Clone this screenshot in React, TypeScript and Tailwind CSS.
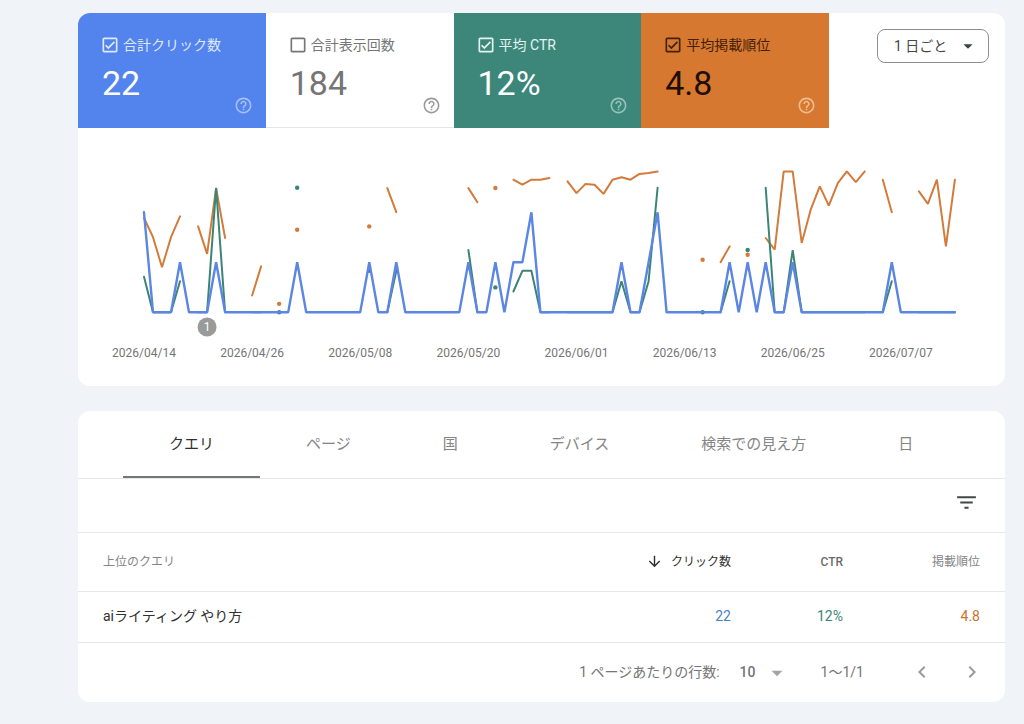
import { useState } from "react";
import {
  MdArrowDownward,
  MdArrowDropDown,
  MdCheckBoxOutlineBlank,
  MdChevronLeft,
  MdChevronRight,
  MdFilterList,
  MdHelpOutline,
  MdOutlineCheckBox,
} from "react-icons/md";

type Metric = {
  id: string;
  label: string;
  value: string;
  tile: string;
  labelColor: string;
  valueColor: string;
  helpColor: string;
};

const METRICS: Metric[] = [
  {
    id: "clicks",
    label: "合計クリック数",
    value: "22",
    tile: "bg-[#5383ec] border-[#5383ec]",
    labelColor: "text-[#dfe9ff]",
    valueColor: "text-white",
    helpColor: "text-[#a6c0f7]",
  },
  {
    id: "impressions",
    label: "合計表示回数",
    value: "184",
    tile: "bg-white border-[#e6e6e8]",
    labelColor: "text-[#757575]",
    valueColor: "text-[#757575]",
    helpColor: "text-[#9a9a9a]",
  },
  {
    id: "ctr",
    label: "平均 CTR",
    value: "12%",
    tile: "bg-[#3c877a] border-[#3c877a]",
    labelColor: "text-[#e3f3ef]",
    valueColor: "text-white",
    helpColor: "text-[#97c4ba]",
  },
  {
    id: "position",
    label: "平均掲載順位",
    value: "4.8",
    tile: "bg-[#d6782f] border-[#d6782f]",
    labelColor: "text-[#43200a]",
    valueColor: "text-[#1f0e03]",
    helpColor: "text-[#f0bd92]",
  },
];

const TABS = ["クエリ", "ページ", "国", "デバイス", "検索での見え方", "日"];

// One point per day, keyed by days since 2026/04/14.
const DAYS = 91;
const CLICKS: Record<number, number> = {
  0: 2, 4: 1, 8: 1, 17: 1, 25: 1, 28: 1, 36: 1, 39: 1, 41: 1, 42: 1, 43: 2,
  53: 1, 56: 1, 57: 2, 65: 1, 67: 1, 69: 1, 72: 1, 83: 1,
};

// Runs of consecutive days that had impressions.
type Run = { start: number; ctr: number[]; position: number[] };

const RUNS: Run[] = [
  { start: 0, ctr: [0.286, 0, 0, 0, 0.25], position: [6.6, 8.9, 12.5, 8.9, 6.4] },
  { start: 6, ctr: [0, 0, 1, 0], position: [7.6, 10.9, 3, 9] },
  { start: 12, ctr: [0, 0], position: [15.9, 12.4] },
  { start: 15, ctr: [0], position: [16.9] },
  { start: 17, ctr: [1], position: [8] },
  { start: 25, ctr: [0.333], position: [7.6] },
  { start: 27, ctr: [0, 0.333], position: [3, 5.9] },
  { start: 36, ctr: [0.5, 0], position: [3, 4.7] },
  { start: 39, ctr: [0.2], position: [3] },
  { start: 41, ctr: [0.167, 0.333, 0.333, 0, 0], position: [2, 2.6, 2, 2, 1.8] },
  {
    start: 47,
    ctr: [0, 0, 0, 0, 0, 0, 0.25, 0, 0, 0.25, 1],
    position: [2.2, 3.6, 2.5, 2.6, 3.7, 2, 1.7, 2, 1.3, 1.2, 1],
  },
  { start: 62, ctr: [0], position: [11.6] },
  { start: 64, ctr: [0, 0.25], position: [11.9, 10] },
  { start: 67, ctr: [0.5], position: [11] },
  {
    start: 69,
    ctr: [1, 0, 0, 0.5, 0, 0, 0, 0, 0, 0, 0, 0],
    position: [9, 10.4, 1, 1, 9.6, 5.6, 2.8, 5.1, 2.4, 1, 2.3, 1],
  },
  { start: 82, ctr: [0, 0.25], position: [2, 5.9] },
  { start: 86, ctr: [0, 0, 0, 0, 0], position: [3.4, 4.9, 2, 10, 2] },
];

const DATE_TICKS = [
  "2026/04/14", "2026/04/26", "2026/05/08", "2026/05/20",
  "2026/06/01", "2026/06/13", "2026/06/25", "2026/07/07",
];

const BASELINE = 184.3;
const dayX = (day: number) => 66 + day * 9.01;
const clicksY = (n: number) => BASELINE - n * 50;
const ctrY = (r: number) => BASELINE - r * 124.5;
const positionY = (p: number) => 43.4 + (p - 1) * 8.33;

function toPoints(start: number, ys: number[]) {
  return ys.map((y, i) => `${dayX(start + i).toFixed(1)},${y.toFixed(1)}`).join(" ");
}

function Series({
  start,
  ys,
  color,
  width = 2,
}: {
  start: number;
  ys: number[];
  color: string;
  width?: number;
}) {
  if (ys.length === 1) {
    return <circle cx={dayX(start)} cy={ys[0]} r="2.2" fill={color} />;
  }
  return (
    <polyline
      points={toPoints(start, ys)}
      fill="none"
      stroke={color}
      strokeWidth={width}
      strokeLinecap="round"
      strokeLinejoin="bevel"
    />
  );
}

function PerformanceChart() {
  const clicks = Array.from({ length: DAYS }, (_, day) => clicksY(CLICKS[day] ?? 0));

  return (
    <svg viewBox="0 0 927 258" className="block w-full" role="img" aria-label="検索パフォーマンス">
      {RUNS.map((run) => (
        <Series key={run.start} start={run.start} ys={run.position.map(positionY)} color="#d37b3a" />
      ))}
      {RUNS.map((run) => (
        <Series key={run.start} start={run.start} ys={run.ctr.map(ctrY)} color="#3c8475" />
      ))}
      <Series start={0} ys={clicks} color="#5b86e3" width={2.4} />

      <circle cx={dayX(7)} cy="199" r="9.5" fill="#9a9a9a" />
      <text x={dayX(7)} y="203" textAnchor="middle" className="fill-white text-[12px]">
        1
      </text>

      {DATE_TICKS.map((date, i) => (
        <text
          key={date}
          x={dayX(i * 12)}
          y="229"
          textAnchor="middle"
          className="fill-[#757575] text-[12px]"
        >
          {date}
        </text>
      ))}
    </svg>
  );
}

function MetricTile({
  metric,
  checked,
  onToggle,
}: {
  metric: Metric;
  checked: boolean;
  onToggle: () => void;
}) {
  const Box = checked ? MdOutlineCheckBox : MdCheckBoxOutlineBlank;

  return (
    <div className={`flex flex-1 flex-col border-b pt-[22px] pl-[22px] ${metric.tile}`}>
      <label
        className={`relative flex cursor-pointer items-center gap-[3px] text-[14px] leading-5 whitespace-nowrap ${metric.labelColor}`}
      >
        <input
          type="checkbox"
          checked={checked}
          onChange={onToggle}
          className="absolute top-0 left-0 size-5 cursor-pointer opacity-0"
        />
        <Box size={20} aria-hidden className="shrink-0" />
        {metric.label}
      </label>
      <div className="mt-2 flex h-[52px] justify-between pr-[13px]">
        <span className={`pl-0.5 text-[34px] leading-10 ${metric.valueColor}`}>{metric.value}</span>
        <button type="button" aria-label="ヘルプ" className={`self-end ${metric.helpColor}`}>
          <MdHelpOutline size={19} />
        </button>
      </div>
      <div className="h-3" />
    </div>
  );
}

export default function App() {
  const [enabled, setEnabled] = useState<Record<string, boolean>>({
    clicks: true,
    impressions: false,
    ctr: true,
    position: true,
  });
  const [tab, setTab] = useState(TABS[0]);

  return (
    <main
      lang="ja"
      className="flex min-h-dvh flex-col gap-[25px] bg-[#f0f3f8] pt-[13px] pr-[19px] pb-[22px] pl-[78px] font-['Roboto','Noto_Sans_CJK_JP',sans-serif]"
    >
      <section className="overflow-hidden rounded-xl bg-white">
        <div className="flex">
          <div className="flex max-w-[751px] flex-1">
            {METRICS.map((metric) => (
              <MetricTile
                key={metric.id}
                metric={metric}
                checked={enabled[metric.id]}
                onToggle={() => setEnabled({ ...enabled, [metric.id]: !enabled[metric.id] })}
              />
            ))}
          </div>
          <div className="relative mt-4 mr-4 ml-auto self-start">
            <select
              aria-label="期間の単位"
              className="h-[34px] w-28 appearance-none rounded-lg border border-[#8e8e8e] bg-white pl-4 text-[14px] text-[#444746]"
            >
              <option>1 日ごと</option>
            </select>
            <MdArrowDropDown
              size={22}
              aria-hidden
              className="pointer-events-none absolute top-1.5 right-2.5 text-[#3c4043]"
            />
          </div>
        </div>
        <PerformanceChart />
      </section>

      <section className="overflow-hidden rounded-xl bg-white text-[14px]">
        <div role="tablist" className="flex border-b border-[#e6e7ea] px-[45px]">
          {TABS.map((name) => (
            <button
              key={name}
              type="button"
              role="tab"
              aria-selected={tab === name}
              onClick={() => setTab(name)}
              className={`h-[67px] border-b-2 px-[46px] pt-0.5 text-[15px] whitespace-nowrap ${
                tab === name
                  ? "border-[#747775] text-[#303030]"
                  : "border-transparent text-[#858585]"
              }`}
            >
              {name}
            </button>
          ))}
        </div>

        <div className="flex h-[54px] items-start justify-end border-b border-[#e6e7ea] pt-[11px] pr-[26px]">
          <button type="button" aria-label="フィルタ" className="text-[#444746]">
            <MdFilterList size={25} />
          </button>
        </div>

        <table className="w-full border-collapse text-right">
          <thead>
            <tr className="h-[58px] border-b border-[#e6e7ea] text-[12px] text-[#858585]">
              <th className="pl-[25px] text-left font-normal">上位のクエリ</th>
              <th className="w-40 font-normal text-[#303030]">
                <span className="flex items-center justify-end gap-2">
                  <MdArrowDownward size={17} aria-hidden />
                  クリック数
                </span>
              </th>
              <th className="w-28 font-medium text-[#6b6b6b]">CTR</th>
              <th className="w-[162px] pr-[25px] font-normal">掲載順位</th>
            </tr>
          </thead>
          <tbody>
            <tr className="h-[51px] border-b border-[#e6e7ea]">
              <td className="pl-[25px] text-left text-[#303030]">aiライティング やり方</td>
              <td className="text-[#4a7fcb]">22</td>
              <td className="text-[#3c8475]">12%</td>
              <td className="pr-[25px] text-[#c9712f]">4.8</td>
            </tr>
          </tbody>
        </table>

        <div className="flex h-[59px] items-center justify-end pr-[21px] text-[#757575]">
          <label htmlFor="page-size">1 ページあたりの行数:</label>
          <div className="relative ml-5 w-[50px]">
            <select id="page-size" className="w-full appearance-none bg-transparent font-medium">
              <option>10</option>
            </select>
            <MdArrowDropDown
              size={26}
              aria-hidden
              className="pointer-events-none absolute -top-0.5 right-0 text-[#a3a3a3]"
            />
          </div>
          <span className="ml-[31px]">1〜1/1</span>
          <div className="ml-[46px] flex gap-[26px] text-[#9a9a9a]">
            <button type="button" aria-label="前のページ">
              <MdChevronLeft size={24} />
            </button>
            <button type="button" aria-label="次のページ">
              <MdChevronRight size={24} />
            </button>
          </div>
        </div>
      </section>
    </main>
  );
}
